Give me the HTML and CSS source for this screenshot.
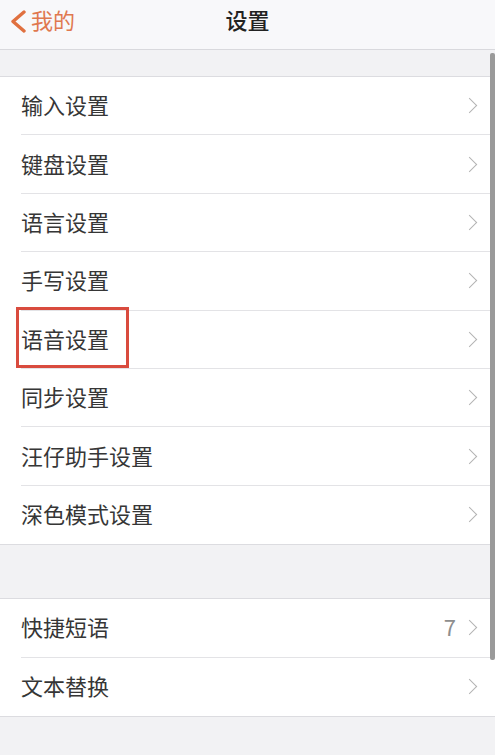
FILE: index.html
```html
<!DOCTYPE html>
<html lang="zh-CN">
<head>
  <meta charset="UTF-8">
  <meta name="viewport" content="width=device-width, initial-scale=1.0">
  <title>设置</title>
  <link rel="stylesheet" href="styles.css">
</head>
<body>
  <div class="page">
    <header class="navbar">
      <a class="back" href="#">
        <svg class="back-icon" width="18" height="24" viewBox="0 0 18 24">
          <polyline points="15,3 4,12.5 15,22" fill="none" stroke="#e0703f" stroke-width="3.4" stroke-linecap="round" stroke-linejoin="round"/>
        </svg>
        <span>我的</span>
      </a>
      <h1 class="title">设置</h1>
    </header>

    <div class="gap gap-top"></div>

    <ul class="group">
      <li class="row"><span class="label">输入设置</span><span class="chev"></span></li>
      <li class="row"><span class="label">键盘设置</span><span class="chev"></span></li>
      <li class="row"><span class="label">语言设置</span><span class="chev"></span></li>
      <li class="row"><span class="label">手写设置</span><span class="chev"></span></li>
      <li class="row marked"><span class="label">语音设置</span><span class="chev"></span><span class="mark"></span></li>
      <li class="row"><span class="label">同步设置</span><span class="chev"></span></li>
      <li class="row"><span class="label">汪仔助手设置</span><span class="chev"></span></li>
      <li class="row"><span class="label">深色模式设置</span><span class="chev"></span></li>
    </ul>

    <div class="gap gap-mid"></div>

    <ul class="group">
      <li class="row"><span class="label">快捷短语</span><span class="value">7</span><span class="chev"></span></li>
      <li class="row"><span class="label">文本替换</span><span class="chev"></span></li>
    </ul>

    <div class="scrollbar"></div>
  </div>
</body>
</html>
```

FILE: styles.css
```css
* {
  box-sizing: border-box;
}

body {
  margin: 0;
  padding: 0;
  background-color: #f2f2f4;
  font-family: "Noto Sans CJK SC", "Noto Sans", sans-serif;
  color: #333;
}

.page {
  position: relative;
  width: 495px;
  height: 755px;
  overflow: hidden;
  background-color: #f2f2f4;
}

.navbar {
  position: relative;
  height: 50px;
  background-color: #f8f8fa;
  border-bottom: 1px solid #d9d9dd;
  display: flex;
  justify-content: center;
}

.back {
  position: absolute;
  left: 9px;
  top: 0;
  height: 38px;
  display: flex;
  align-items: center;
  gap: 4px;
  text-decoration: none;
  color: #e0784f;
  font-size: 22px;
  line-height: 1;
}

.back-icon {
  display: block;
  margin-top: 3px;
}

.title {
  margin: 0;
  height: 37px;
  display: flex;
  align-items: center;
  line-height: 1;
  font-size: 22px;
  font-weight: 500;
  color: #222;
}

.gap-top {
  height: 26px;
}

.gap-mid {
  height: 53px;
}

.group {
  list-style: none;
  margin: 0;
  padding: 0;
  background: #fff;
  border-top: 1px solid #dcdce0;
  border-bottom: 1px solid #dcdce0;
}

.row {
  position: relative;
  height: 58.4px;
  margin-left: 21px;
  padding-right: 17px;
  padding-bottom: 3px;
  display: flex;
  align-items: center;
  border-bottom: 1px solid #e3e3e6;
}

.row:last-child {
  border-bottom: none;
}

.label {
  flex: 1;
  font-size: 22px;
  line-height: 1;
  color: #363636;
}

.value {
  font-size: 22px;
  line-height: 1;
  color: #8e8e8e;
  margin-right: 8px;
}

.chev {
  width: 11px;
  height: 11px;
  border-top: 1.6px solid #b3b3b3;
  border-right: 1.6px solid #b3b3b3;
  transform: rotate(45deg);
  margin-right: 3px;
  margin-top: 3px;
}

.mark {
  position: absolute;
  left: -5px;
  top: -4px;
  width: 113px;
  height: 61px;
  border: 3px solid #d94b3e;
}

.scrollbar {
  position: absolute;
  right: 0;
  top: 53px;
  width: 5px;
  height: 607px;
  background-color: #9a9a9a;
  border-radius: 2px;
}
```
